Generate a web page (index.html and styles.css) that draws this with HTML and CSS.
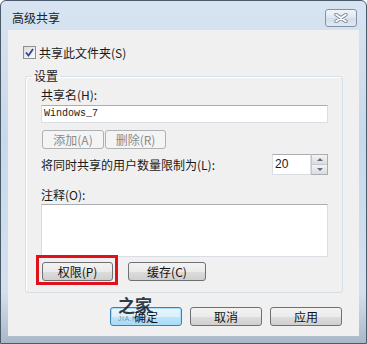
FILE: index.html
```html
<!DOCTYPE html>
<html lang="zh-CN">
<head>
  <meta charset="UTF-8" />
  <title>高级共享</title>
  <link rel="stylesheet" href="styles.css">
</head>
<body>
  <div class="window">
    <div class="titlebar">
      <span class="title">高级共享</span>
      <span class="close">
        <svg width="14" height="10" viewBox="0 0 14 10">
          <path d="M2 1.5 L12 8.5 M12 1.5 L2 8.5" stroke="#7b8898" stroke-width="3.4" stroke-linecap="round"/>
          <path d="M2 1.5 L12 8.5 M12 1.5 L2 8.5" stroke="#ffffff" stroke-width="1.6" stroke-linecap="round"/>
        </svg>
      </span>
    </div>

    <div class="client">
      <label class="check-row">
        <span class="checkbox">
          <svg width="9" height="9" viewBox="0 0 9 9">
            <path d="M1 4.5 L3.5 7.5 L8 1" fill="none" stroke="#2d4b8a" stroke-width="1.8"/>
          </svg>
        </span>
        共享此文件夹(S)
      </label>

      <fieldset class="group">
        <legend>设置</legend>

        <div class="label">共享名(H):</div>
        <div class="textbox">Windows_7</div>

        <div class="btn-row tight">
          <button class="btn disabled w62">添加(A)</button>
          <button class="btn disabled w61">删除(R)</button>
        </div>

        <div class="limit-row">
          <span class="label">将同时共享的用户数量限制为(L):</span>
          <div class="spin">
            <div class="spin-value">20</div>
            <div class="spin-arrows">
              <span class="arrow up"></span>
              <span class="arrow down"></span>
            </div>
          </div>
        </div>

        <div class="label note-label">注释(O):</div>
        <div class="textarea"></div>

        <div class="btn-row wide">
          <span class="highlight"><button class="btn w71">权限(P)</button></span>
          <button class="btn w78">缓存(C)</button>
        </div>
      </fieldset>

      <div class="dialog-buttons">
        <button class="btn default w72">确定</button>
        <button class="btn w72">取消</button>
        <button class="btn w72">应用</button>
      </div>
    </div>

    <div class="watermark">
      <span class="wm-big">之家</span>
      <span class="wm-small">JIA.NET</span>
    </div>
  </div>
</body>
</html>
```

FILE: styles.css
```css
body {
  margin: 0;
  font-family: "Noto Sans CJK SC", "Noto Sans", sans-serif;
  font-size: 12px;
  color: #1a1a1a;
  overflow: hidden;
}
.window {
  position: relative;
  width: 367px;
  height: 344px;
  box-sizing: border-box;
  border: 1px solid #4b5a6b;
  border-radius: 6px 6px 0 0;
  background: linear-gradient(to bottom, #d8e4f1 0%, #c9d9ea 40%, #d3e1ef 85%, #a9b8c8 100%);
  display: flex;
  flex-direction: column;
}
.titlebar {
  height: 29px;
  box-sizing: border-box;
  padding: 5px 9px 0 11px;
  display: flex;
  align-items: center;
  justify-content: space-between;
}
.title {
  font-size: 12px;
  line-height: 14px;
  color: #222;
}
.close {
  width: 32px;
  height: 18px;
  box-sizing: border-box;
  border: 1px solid #8292a6;
  border-radius: 3px;
  background: linear-gradient(to bottom, #f1f5f9, #dde6ef 50%, #d2dde8 51%, #e1e9f1);
  display: flex;
  align-items: center;
  justify-content: center;
}
.client {
  flex: 1;
  margin: 0 7px 7px 7px;
  padding: 0 16px 0 15px;
  background: #f0f0f0;
  display: flex;
  flex-direction: column;
}
.check-row {
  margin-top: 16px;
  height: 13px;
  display: flex;
  align-items: center;
  gap: 3px;
  line-height: 14px;
}
.checkbox {
  width: 13px;
  height: 13px;
  box-sizing: border-box;
  border: 1px solid #8e8f8f;
  background: linear-gradient(135deg, #dcdcdc, #fbfbfb);
  display: flex;
  align-items: center;
  justify-content: center;
}
.group {
  margin: 10px 0 0 2px;
  padding: 5px 14px 11px 15px;
  border: 1px solid #d5dfe5;
  border-radius: 3px;
  box-shadow: inset 1px 1px 0 #fff;
  min-width: 0;
}
.group legend {
  margin-left: -9px;
  padding: 0 2px;
  line-height: 14px;
}
.label {
  line-height: 14px;
}
.textbox {
  margin-top: 3px;
  height: 18px;
  box-sizing: border-box;
  border: 1px solid #d9dee5;
  border-top-color: #abadb3;
  background: #fff;
  padding: 0 2px;
  font-family: "Liberation Mono", monospace;
  font-size: 10px;
  line-height: 16px;
}
.btn-row {
  display: flex;
}
.btn-row.tight {
  margin-top: 7px;
  margin-left: 1px;
  gap: 1px;
}
.btn-row.wide {
  margin-top: 5px;
  margin-left: 1px;
  gap: 15px;
}
.btn {
  height: 19px;
  box-sizing: border-box;
  padding: 0;
  border: 1px solid #707070;
  border-radius: 3px;
  background: linear-gradient(to bottom, #f2f2f2 0%, #ebebeb 50%, #dddddd 51%, #cfcfcf 100%);
  font-family: inherit;
  font-size: 12px;
  line-height: 16px;
  color: #111;
}
.btn.disabled {
  border-color: #adb2b5;
  background: #f4f4f4;
  color: #8a8a8a;
}
.btn.default {
  border-color: #3c7fb1;
  box-shadow: inset 0 0 0 1px #a9dcf6;
  background: linear-gradient(to bottom, #eaf6fd 0%, #d9f0fc 50%, #bee6fd 51%, #a7d9f5 100%);
}
.w61 { width: 61px; }
.w62 { width: 62px; }
.w71 { width: 71px; }
.w72 { width: 72px; }
.w78 { width: 78px; }
.limit-row {
  margin-top: 5px;
  display: flex;
  align-items: center;
  justify-content: space-between;
}
.spin {
  width: 56px;
  height: 21px;
  display: flex;
}
.spin-value {
  flex: 1;
  border: 1px solid #d9dee5;
  border-top-color: #abadb3;
  background: #fff;
  padding-left: 2px;
  font-family: "Liberation Sans", sans-serif;
  font-size: 12px;
  line-height: 19px;
}
.spin-arrows {
  width: 16px;
  display: flex;
  flex-direction: column;
  border: 1px solid #abadb3;
  border-left: none;
}
.arrow {
  flex: 1;
  background: linear-gradient(to bottom, #f3f3f3, #dcdcdc);
  border-left: 1px solid #c4c8cc;
  display: flex;
  align-items: center;
  justify-content: center;
}
.arrow.up { border-bottom: 1px solid #c4c8cc; }
.arrow::after {
  content: "";
  border-left: 3px solid transparent;
  border-right: 3px solid transparent;
}
.arrow.up::after { border-bottom: 3px solid #5b6d86; }
.arrow.down::after { border-top: 3px solid #5b6d86; }
.note-label {
  margin-top: 13px;
}
.textarea {
  margin-top: 2px;
  height: 53px;
  box-sizing: border-box;
  border: 1px solid #d9dee5;
  border-top-color: #abadb3;
  background: #fff;
}
.highlight {
  position: relative;
  display: flex;
}
.highlight::after {
  content: "";
  position: absolute;
  top: -7px;
  left: -6px;
  right: -5px;
  bottom: -4px;
  border: 3px solid #e0111b;
}
.dialog-buttons {
  margin: 14px 1px 0 0;
  display: flex;
  justify-content: flex-end;
  gap: 8px;
}
.watermark {
  position: absolute;
  left: 117px;
  top: 294px;
  display: flex;
  flex-direction: column;
  pointer-events: none;
}
.wm-big {
  font-size: 17px;
  font-weight: bold;
  line-height: 20px;
  color: rgba(20, 35, 50, 0.9);
}
.wm-small {
  font-family: "Liberation Sans", sans-serif;
  font-size: 7px;
  line-height: 8px;
  color: rgba(60, 90, 120, 0.6);
  letter-spacing: 0.5px;
}
```
